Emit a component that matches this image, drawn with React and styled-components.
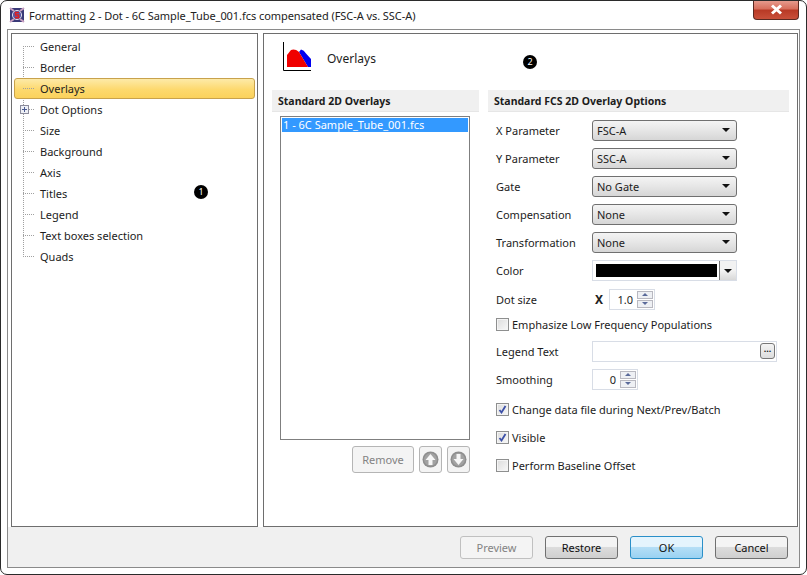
import React from 'react';
import styled, { createGlobalStyle } from 'styled-components';

const Global = createGlobalStyle`
  html, body { margin: 0; padding: 0; background: #fff; }
  * { box-sizing: border-box; }
  body { font-family: "Noto Sans", "Open Sans", sans-serif; font-size: 11px; color: #1c1c1c; }
`;

const Win = styled.div`
  position: relative;
  width: 807px;
  height: 575px;
  background: #fff;
  border: 1px solid #2b2b2b;
  border-radius: 7px;
  padding: 0 6px 6px 6px;
  display: flex;
  flex-direction: column;
  overflow: hidden;
`;

const TitleBar = styled.div`
  height: 28px;
  display: flex;
  align-items: center;
  gap: 4px;
  padding-left: 2px;
  font-size: 11px;
  letter-spacing: -0.06px;
  color: #222;
`;

const Close = styled.div`
  position: absolute;
  top: -1px;
  right: 7px;
  width: 46px;
  height: 20px;
  border: 1px solid #5a2a22;
  border-top: 0;
  border-radius: 0 0 4px 4px;
  background: linear-gradient(#e8a093 0%, #d8705e 45%, #b93a26 55%, #c9503a 100%);
  display: flex;
  align-items: center;
  justify-content: center;
  color: #fff;
`;

const Frame = styled.div`
  flex: 1;
  display: flex;
  flex-direction: column;
  border: 1px solid #8a8a8a;
  min-height: 0;
`;

const Panels = styled.div`
  flex: 1;
  display: flex;
  gap: 5px;
  padding: 3px 4px 0 3px;
  min-height: 0;
`;

const Left = styled.div`
  width: 247px;
  flex: none;
  border: 1px solid #6e6e6e;
  padding: 2px;
  position: relative;
`;

const TreeLine = styled.div`
  position: absolute;
  left: 11px;
  top: 12px;
  height: 211px;
  border-left: 1px dotted #a0a0a0;
`;

const TreeRow = styled.div`
  position: relative;
  height: 21px;
  padding-left: 25px;
  display: flex;
  align-items: center;
  border: 1px solid ${p => (p.$on ? '#c8a24c' : 'transparent')};
  border-radius: 3px;
  background: ${p => (p.$on ? 'linear-gradient(#fdeaa8, #fdd96e 55%, #fbd25c)' : 'transparent')};
  &::before {
    content: '';
    position: absolute;
    left: 8px;
    top: 9px;
    width: 11px;
    border-top: 1px dotted #a0a0a0;
  }
`;

const Plus = styled.span`
  position: absolute;
  left: 5px;
  top: 5px;
  width: 9px;
  height: 9px;
  background: #eef0f6 linear-gradient(#4a5a90, #4a5a90) center / 5px 1px no-repeat;
  border: 1px solid #8c8c9c;
  z-index: 1;
  &::after {
    content: '';
    position: absolute;
    left: 3px;
    top: 1px;
    width: 1px;
    height: 5px;
    background: #4a5a90;
  }
`;

const Right = styled.div`
  flex: 1;
  border: 1px solid #6e6e6e;
  display: flex;
  flex-direction: column;
  padding: 0 8px;
`;

const Head = styled.div`
  height: 56px;
  flex: none;
  display: flex;
  align-items: flex-start;
  gap: 15px;
  padding: 8px 0 0 11px;
  font-size: 12px;
  position: relative;
`;

const HeadText = styled.span`
  margin-top: 8px;
`;

const Columns = styled.div`
  display: flex;
  gap: 9px;
  flex: 1;
  min-height: 0;
`;

const ColA = styled.div`
  width: 207px;
  display: flex;
  flex-direction: column;
`;

const ColB = styled.div`
  width: 301px;
  display: flex;
  flex-direction: column;
`;

const SectionHead = styled.div`
  height: 22px;
  flex: none;
  background: #f0f0f0;
  border-bottom: 1px solid #e6e6e6;
  font-weight: 700;
  font-size: 10.5px;
  padding-left: 6px;
  display: flex;
  align-items: center;
`;

const List = styled.div`
  margin: 4px 9px 0 8px;
  height: 324px;
  flex: none;
  border: 1px solid #7f7f7f;
  padding: 1px;
`;

const ListItem = styled.div`
  height: 14px;
  line-height: 14px;
  background: #3399ff;
  color: #fff;
  padding-left: 1px;
  font-size: 11px;
`;

const ListTools = styled.div`
  display: flex;
  justify-content: flex-end;
  gap: 5px;
  margin: 6px 9px 0 0;
`;

const SmallBtn = styled.div`
  height: 27px;
  width: ${p => p.$w}px;
  border: 1px solid #b5b5b5;
  border-radius: 3px;
  background: #f4f4f4;
  color: #838383;
  display: flex;
  align-items: center;
  justify-content: center;
`;

const Form = styled.div`
  display: flex;
  flex-direction: column;
  padding: 4px 0 0 8px;
`;

const Row = styled.div`
  height: ${p => p.$h || 28}px;
  flex: none;
  margin-top: ${p => p.$mt || 0}px;
  display: flex;
  align-items: center;
`;

const Label = styled.div`
  width: 96px;
  flex: none;
`;

const Select = styled.div`
  width: 145px;
  height: 21px;
  border: 1px solid #707070;
  border-radius: 3px;
  background: linear-gradient(#f4f4f4, #e6e6e6 50%, #d6d6d6);
  padding-left: 4px;
  display: flex;
  align-items: center;
  justify-content: space-between;
  &::after {
    content: '';
    margin-right: 6px;
    border: 4px solid transparent;
    border-top: 4px solid #111;
    border-bottom: 0;
  }
`;

const ColorSelect = styled.div`
  width: 145px;
  height: 21px;
  border: 1px solid #d8dde6;
  display: flex;
  padding: 3px 0 3px 3px;
`;

const Swatch = styled.div`
  width: 121px;
  background: #000;
`;

const ColorArrow = styled.div`
  flex: 1;
  margin: -3px 0 -3px 2px;
  border-left: 1px solid #777;
  background: linear-gradient(#f2f2f2 50%, #d8d8d8);
  display: flex;
  align-items: center;
  justify-content: center;
  &::after {
    content: '';
    border: 4px solid transparent;
    border-top: 4px solid #111;
    border-bottom: 0;
  }
`;

const Times = styled.b`
  display: block;
  font-size: 12px;
  width: 17px;
  padding-left: 3px;
  color: #222;
`;

const Spin = styled.div`
  height: 21px;
  width: ${p => p.$w}px;
  border: 1px solid #d8dde6;
  display: flex;
  align-items: center;
  justify-content: flex-end;
`;

const SpinArrows = styled.div`
  width: 16px;
  height: 17px;
  margin: 0 1px 0 4px;
  display: flex;
  flex-direction: column;
  gap: 1px;
`;

const SpinArrow = styled.div`
  flex: 1;
  border: 1px solid #b8b8c0;
  background: #eef0f4;
  display: flex;
  align-items: center;
  justify-content: center;
  &::after {
    content: '';
    border: 3px solid transparent;
    ${p => (p.$up ? 'border-bottom: 3px solid #5a6a9a; border-top: 0;' : 'border-top: 3px solid #5a6a9a; border-bottom: 0;')}
  }
`;

const CheckRow = styled.div`
  height: ${p => p.$h || 28}px;
  flex: none;
  margin-top: ${p => p.$mt || 0}px;
  display: flex;
  align-items: center;
  gap: 3px;
`;

const Box = styled.span`
  width: 13px;
  height: 13px;
  border: 1px solid #8e8f8f;
  background: linear-gradient(135deg, #dcdcdc, #f8f8f8);
  box-shadow: inset 0 0 0 1px #f4f4f4;
  display: flex;
  align-items: center;
  justify-content: center;
`;

const TextField = styled.div`
  width: 185px;
  height: 21px;
  border: 1px solid #d8dde6;
  display: flex;
  justify-content: flex-end;
  align-items: center;
  padding-right: 1px;
`;

const Dots = styled.div`
  width: 15px;
  height: 16px;
  border: 1px solid #777;
  border-radius: 3px;
  background: linear-gradient(#f4f4f4, #ddd);
  font-size: 9px;
  font-weight: 700;
  line-height: 10px;
  text-align: center;
`;

const Footer = styled.div`
  height: 40px;
  flex: none;
  background: #f0f0f0;
  display: flex;
  justify-content: flex-end;
  align-items: center;
  gap: 12px;
  padding: 1px 11px 0 0;
`;

const Btn = styled.div`
  width: 73px;
  height: 23px;
  border-radius: 3px;
  display: flex;
  align-items: center;
  justify-content: center;
  color: ${p => (p.$off ? '#838383' : '#111')};
  border: 1px solid ${p => (p.$off ? '#c0c0c0' : p.$main ? '#2a8fc8' : '#707070')};
  background: ${p =>
    p.$off ? '#f4f4f4'
    : p.$main ? 'linear-gradient(#e4f4fd 45%, #b4def6 50%, #9ad2f2)'
    : 'linear-gradient(#f4f4f4 45%, #dcdcdc 50%, #cfcfcf)'};
`;

const Marker = styled.span`
  position: absolute;
  left: ${p => p.$x}px;
  top: ${p => p.$y}px;
  width: 14px;
  height: 14px;
  border-radius: 50%;
  background: #000;
  color: #fff;
  font-size: 9px;
  line-height: 14px;
  text-align: center;
`;

const items = ['General', 'Border', 'Overlays', 'Dot Options', 'Size', 'Background', 'Axis', 'Titles', 'Legend', 'Text boxes selection', 'Quads'];

const AppIcon = () => (
  <svg width="16" height="16" viewBox="0 0 16 16">
    <rect x="1" y="1" width="14" height="14" rx="2" fill="#3a3a78" />
    <path d="M1 1 L5 4 M15 1 L11 4 M1 15 L5 12 M15 15 L11 12" stroke="#c8a0c0" strokeWidth="2" />
    <circle cx="8" cy="8" r="4.6" fill="#5a5aa8" stroke="#d8d8e8" />
    <path d="M10 5.5 H6.6 V8 H9.6 V10.6 H6" fill="none" stroke="#e02020" strokeWidth="1.6" />
  </svg>
);

const OverlayIcon = () => (
  <svg width="29" height="29" viewBox="0 0 29 29">
    <path d="M0.5 0 V28.5 H28" fill="none" stroke="#000" />
    <path d="M16 10 L18 7.5 Q21 8 23 11.5 L28 17 V25 H25 Z" fill="#0000f0" />
    <path d="M4 25 V13 L8 8 Q12 6.5 16 10 L25 25 Z" fill="#f00000" />
  </svg>
);

const Check = ({ on }) => (
  <Box>
    {on && (
      <svg width="9" height="9" viewBox="0 0 9 9">
        <path d="M1.5 5 L3.5 7.5 L7.5 1" fill="none" stroke="#3c50a8" strokeWidth="1.8" />
      </svg>
    )}
  </Box>
);

const Round = ({ down }) => (
  <svg width="17" height="17" viewBox="0 0 17 17">
    <circle cx="8.5" cy="8.5" r="8" fill="#8e8e8e" />
    <circle cx="8.5" cy="8.5" r="6.5" fill="#a2a2a2" />
    <path d={down ? 'M6.5 3 H10.5 V8 H13.5 L8.5 14 L3.5 8 H6.5 Z' : 'M6.5 14 H10.5 V9 H13.5 L8.5 3 L3.5 9 H6.5 Z'} fill="#f6f6f6" />
  </svg>
);

export default function App() {
  return (
    <>
      <Global />
      <Win>
        <TitleBar>
          <AppIcon />
          <span>Formatting 2 - Dot - 6C Sample_Tube_001.fcs compensated (FSC-A vs. SSC-A)</span>
        </TitleBar>
        <Close>
          <svg width="15" height="11" viewBox="0 0 15 11">
            <path d="M3 1.5 L12 9.5 M12 1.5 L3 9.5" stroke="#fff" strokeWidth="3" />
          </svg>
        </Close>
        <Frame>
          <Panels>
            <Left>
              <TreeLine />
              {items.map(t => (
                <TreeRow key={t} $on={t === 'Overlays'}>
                  {t === 'Dot Options' && <Plus />}
                  {t}
                </TreeRow>
              ))}
              <Marker $x={182} $y={151}>1</Marker>
            </Left>
            <Right>
              <Head>
                <OverlayIcon />
                <HeadText>Overlays</HeadText>
                <Marker $x={251} $y={21}>2</Marker>
              </Head>
              <Columns>
                <ColA>
                  <SectionHead>Standard 2D Overlays</SectionHead>
                  <List>
                    <ListItem>1 - 6C Sample_Tube_001.fcs</ListItem>
                  </List>
                  <ListTools>
                    <SmallBtn $w={62}>Remove</SmallBtn>
                    <SmallBtn $w={23}><Round /></SmallBtn>
                    <SmallBtn $w={23}><Round down /></SmallBtn>
                  </ListTools>
                </ColA>
                <ColB>
                  <SectionHead>Standard FCS 2D Overlay Options</SectionHead>
                  <Form>
                    <Row><Label>X Parameter</Label><Select>FSC-A</Select></Row>
                    <Row><Label>Y Parameter</Label><Select>SSC-A</Select></Row>
                    <Row><Label>Gate</Label><Select>No Gate</Select></Row>
                    <Row><Label>Compensation</Label><Select>None</Select></Row>
                    <Row><Label>Transformation</Label><Select>None</Select></Row>
                    <Row $h={29}>
                      <Label>Color</Label>
                      <ColorSelect><Swatch /><ColorArrow /></ColorSelect>
                    </Row>
                    <Row>
                      <Label>Dot size</Label>
                      <Times>X</Times>
                      <Spin $w={46}>1.0<SpinArrows><SpinArrow $up /><SpinArrow /></SpinArrows></Spin>
                    </Row>
                    <CheckRow $h={22}><Check />Emphasize Low Frequency Populations</CheckRow>
                    <Row $mt={2}><Label>Legend Text</Label><TextField><Dots>...</Dots></TextField></Row>
                    <Row>
                      <Label>Smoothing</Label>
                      <Spin $w={46}>0<SpinArrows><SpinArrow $up /><SpinArrow /></SpinArrows></Spin>
                    </Row>
                    <CheckRow $mt={2}><Check on />Change data file during Next/Prev/Batch</CheckRow>
                    <CheckRow><Check on />Visible</CheckRow>
                    <CheckRow><Check />Perform Baseline Offset</CheckRow>
                  </Form>
                </ColB>
              </Columns>
            </Right>
          </Panels>
          <Footer>
            <Btn $off>Preview</Btn>
            <Btn>Restore</Btn>
            <Btn $main>OK</Btn>
            <Btn>Cancel</Btn>
          </Footer>
        </Frame>
      </Win>
    </>
  );
}
